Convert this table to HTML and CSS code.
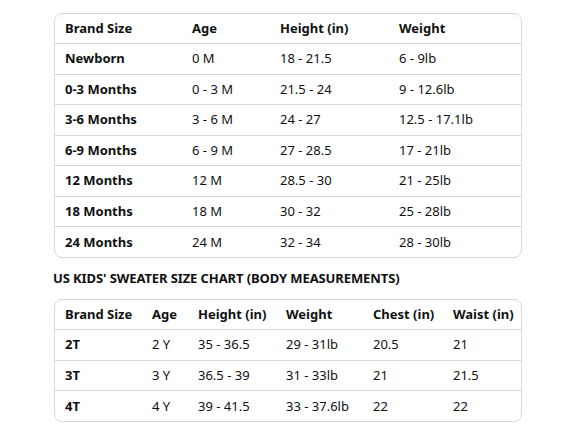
FILE: index.html
```html
<!DOCTYPE html>
<html>
<head>
<meta charset="utf-8">
<link rel="stylesheet" href="styles.css">
</head>
<body>
<div class="page">
  <div class="card card-baby">
    <table class="chart">
      <colgroup><col class="b1"><col class="b2"><col class="b3"><col class="b4"></colgroup>
      <thead><tr><th>Brand Size</th><th>Age</th><th>Height (in)</th><th>Weight</th></tr></thead>
      <tbody>
        <tr><th>Newborn</th><td>0 M</td><td>18 - 21.5</td><td>6 - 9lb</td></tr>
        <tr><th>0-3 Months</th><td>0 - 3 M</td><td>21.5 - 24</td><td>9 - 12.6lb</td></tr>
        <tr><th>3-6 Months</th><td>3 - 6 M</td><td>24 - 27</td><td>12.5 - 17.1lb</td></tr>
        <tr><th>6-9 Months</th><td>6 - 9 M</td><td>27 - 28.5</td><td>17 - 21lb</td></tr>
        <tr><th>12 Months</th><td>12 M</td><td>28.5 - 30</td><td>21 - 25lb</td></tr>
        <tr><th>18 Months</th><td>18 M</td><td>30 - 32</td><td>25 - 28lb</td></tr>
        <tr><th>24 Months</th><td>24 M</td><td>32 - 34</td><td>28 - 30lb</td></tr>
      </tbody>
    </table>
  </div>
  <h2 class="title">US KIDS' SWEATER SIZE CHART (BODY MEASUREMENTS)</h2>
  <div class="card card-kids">
    <table class="chart">
      <colgroup><col class="k1"><col class="k2"><col class="k3"><col class="k4"><col class="k5"><col class="k6"></colgroup>
      <thead><tr><th>Brand Size</th><th>Age</th><th>Height (in)</th><th>Weight</th><th>Chest (in)</th><th>Waist (in)</th></tr></thead>
      <tbody>
        <tr><th>2T</th><td>2 Y</td><td>35 - 36.5</td><td>29 - 31lb</td><td>20.5</td><td>21</td></tr>
        <tr><th>3T</th><td>3 Y</td><td>36.5 - 39</td><td>31 - 33lb</td><td>21</td><td>21.5</td></tr>
        <tr><th>4T</th><td>4 Y</td><td>39 - 41.5</td><td>33 - 37.6lb</td><td>22</td><td>22</td></tr>
      </tbody>
    </table>
  </div>
</div>
</body>
</html>
```
FILE: styles.css
```css
html, body {
  margin: 0;
  padding: 0;
  background: #ffffff;
}
body {
  font-family: "Noto Sans", "Liberation Sans", sans-serif;
  font-size: 13px;
  color: #0f1111;
}
.page {
  padding: 13px 0 0 54px;
  width: 468px;
}
.card {
  border: 1px solid #d5d9d9;
  border-radius: 8px;
  overflow: hidden;
}
.chart {
  width: 100%;
  border-collapse: collapse;
  table-layout: fixed;
}
.chart th,
.chart td {
  height: 29.5px;
  padding: 0 0 1px 10px;
  text-align: left;
  vertical-align: middle;
  white-space: nowrap;
  box-sizing: border-box;
}
.chart th { font-weight: 700; }
.chart td { font-weight: 400; }
.chart tbody tr th,
.chart tbody tr td {
  border-top: 1px solid #d5d9d9;
  height: 30.5px;
}
.b1 { width: 127px; }
.b2 { width: 88px; }
.b3 { width: 119px; }
.b4 { width: auto; }
.k1 { width: 87px; }
.k2 { width: 46px; }
.k3 { width: 88px; }
.k4 { width: 87px; }
.k5 { width: 80px; }
.k6 { width: auto; }
.title {
  margin: 12px 0 12px -1px;
  font-size: 13px;
  font-weight: 700;
  line-height: 17px;
  letter-spacing: -0.1px;
}
```
